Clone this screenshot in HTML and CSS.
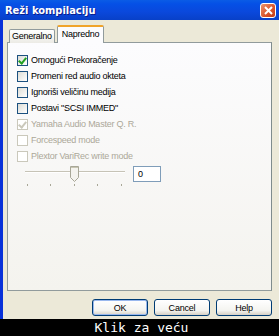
FILE: index.html
```html
<!DOCTYPE html>
<html lang="sr">
<head>
	<meta charset="UTF-8">
	<title>Reži kompilaciju</title>
	<link rel="stylesheet" href="styles.css">
</head>
<body>
	<div class="window">
		<div class="titlebar">
			<span class="title">Reži kompilaciju</span>
			<span class="close">
				<svg width="11" height="11" viewBox="0 0 11 11"><path d="M2 2L9 9M9 2L2 9" stroke="#fff" stroke-width="2"/></svg>
			</span>
		</div>
		<div class="body">
			<div class="tabs">
				<div class="tab">Generalno</div>
				<div class="tab active">Napredno</div>
			</div>
			<div class="panel">
				<label class="row"><span class="check on"></span>Omogući Prekoračenje</label>
				<label class="row"><span class="check"></span>Promeni red audio okteta</label>
				<label class="row"><span class="check"></span>Ignoriši veličinu medija</label>
				<label class="row"><span class="check"></span>Postavi "SCSI IMMED"</label>
				<label class="row off"><span class="check on"></span>Yamaha Audio Master Q. R.</label>
				<label class="row off"><span class="check"></span>Forcespeed mode</label>
				<label class="row off"><span class="check"></span>Plextor VariRec write mode</label>
				<div class="sliderrow">
					<svg class="slider" width="104" height="24" viewBox="0 0 104 24">
						<rect x="2" y="6" width="100" height="2" fill="#c6c3b6"/>
						<rect x="2" y="7" width="100" height="1" fill="#fff"/>
						<path d="M47.5 1.5H55.5V12.5L51.5 16.5L47.5 12.5Z" fill="#f4f3ee" stroke="#a8a797"/>
						<rect x="48" y="2" width="7" height="1" fill="#c7c5b2"/>
						<g fill="#a8a797">
							<rect x="4" y="19" width="1" height="2"/>
							<rect x="27" y="19" width="1" height="2"/>
							<rect x="51" y="19" width="1" height="2"/>
							<rect x="74" y="19" width="1" height="2"/>
							<rect x="98" y="19" width="1" height="2"/>
						</g>
					</svg>
					<div class="edit">0</div>
				</div>
			</div>
			<div class="buttons">
				<button class="btn def">OK</button>
				<button class="btn">Cancel</button>
				<button class="btn">Help</button>
			</div>
		</div>
	</div>
	<div class="caption">Klik za veću</div>
</body>
</html>
```

FILE: styles.css
```css
*{
	margin: 0;
	padding: 0;
	box-sizing: border-box;
}
body{
	width: 279px;
	height: 336px;
	background: #000;
	font-family: "Liberation Sans", Arial, sans-serif;
	font-size: 9px;
	letter-spacing: -0.25px;
	color: #000;
	overflow: hidden;
}
.window{
	height: 319px;
	background: #ece9d8;
	border-left: 3px solid #0831d9;
	display: flex;
	flex-direction: column;
}
.titlebar{
	height: 20px;
	margin-left: -3px;
	background: linear-gradient(#0a5ce6, #0550e6 20%, #0a48dc 60%, #0840c8);
	display: flex;
	align-items: center;
	justify-content: space-between;
	padding: 0 3px 0 5px;
}
.title{
	color: #fff;
	font-family: "DejaVu Sans Condensed", "Liberation Sans", sans-serif;
	font-weight: bold;
	font-size: 11px;
	letter-spacing: 0;
	text-shadow: 1px 1px 0 #0a1e8c;
}
.close{
	width: 16px;
	height: 15px;
	border: 1px solid #fff;
	border-radius: 3px;
	background: linear-gradient(135deg, #e8926c, #d9532a 60%, #c23c15);
	display: flex;
	align-items: center;
	justify-content: center;
}
.body{
	flex: 1;
	display: flex;
	flex-direction: column;
	padding: 5px 7px 0 4px;
}
.tabs{
	display: flex;
	align-items: flex-end;
	height: 18px;
	padding-left: 2px;
	position: relative;
	z-index: 1;
}
.tab{
	height: 14px;
	padding: 0 2px;
	border: 1px solid #919b9c;
	border-bottom: none;
	border-radius: 2px 2px 0 0;
	background: linear-gradient(#fff, #ecebe5);
	line-height: 13px;
}
.tab.active{
	height: 18px;
	margin-left: 2px;
	padding: 0 4px;
	background: #fcfcfe;
	border-top: 2px solid #f0a42b;
	line-height: 15px;
}
.panel{
	height: 249px;
	margin-top: -1px;
	background: linear-gradient(#fcfcfe, #f4f3ee);
	border: 1px solid #919b9c;
	border-right-color: #7f8c8d;
	padding: 9px 0 0 9px;
	display: flex;
	flex-direction: column;
}
.row{
	height: 16px;
	display: flex;
	align-items: center;
	gap: 3px;
}
.check{
	width: 11px;
	height: 11px;
	border: 1px solid #1c5180;
	background: linear-gradient(135deg, #dcdcd6, #fff);
	position: relative;
}
.check.on::after{
	content: "";
	position: absolute;
	left: 2px;
	top: 0;
	width: 3px;
	height: 6px;
	border: solid #21a121;
	border-width: 0 2px 2px 0;
	transform: rotate(40deg);
}
.row.off{
	color: #aca899;
}
.row.off .check{
	border-color: #cac8bb;
	background: #fff;
}
.row.off .check.on::after{
	border-color: #cac8bb;
}
.sliderrow{
	display: flex;
	align-items: flex-start;
	gap: 6px;
	margin-top: 1px;
	padding-left: 6px;
}
.edit{
	margin-top: 1px;
	width: 28px;
	height: 16px;
	background: #fff;
	border: 1px solid #7f9db9;
	padding-left: 4px;
	line-height: 14px;
}
.buttons{
	display: flex;
	justify-content: flex-end;
	gap: 6px;
	padding-top: 8px;
}
.btn{
	width: 56px;
	height: 17px;
	border: 1px solid #003c74;
	border-radius: 3px;
	background: linear-gradient(#fff, #f4f4f0 70%, #d6d0c5);
	font-family: "Liberation Sans", Arial, sans-serif;
	font-size: 9px;
	letter-spacing: -0.2px;
	color: #000;
}
.btn.def{
	box-shadow: inset 0 0 0 1px #99b8ee;
}
.caption{
	height: 17px;
	color: #fff;
	font-family: "DejaVu Sans Mono", "Liberation Mono", monospace;
	font-size: 13px;
	letter-spacing: 0;
	text-align: center;
	line-height: 17px;
	padding-left: 4px;
}
```
